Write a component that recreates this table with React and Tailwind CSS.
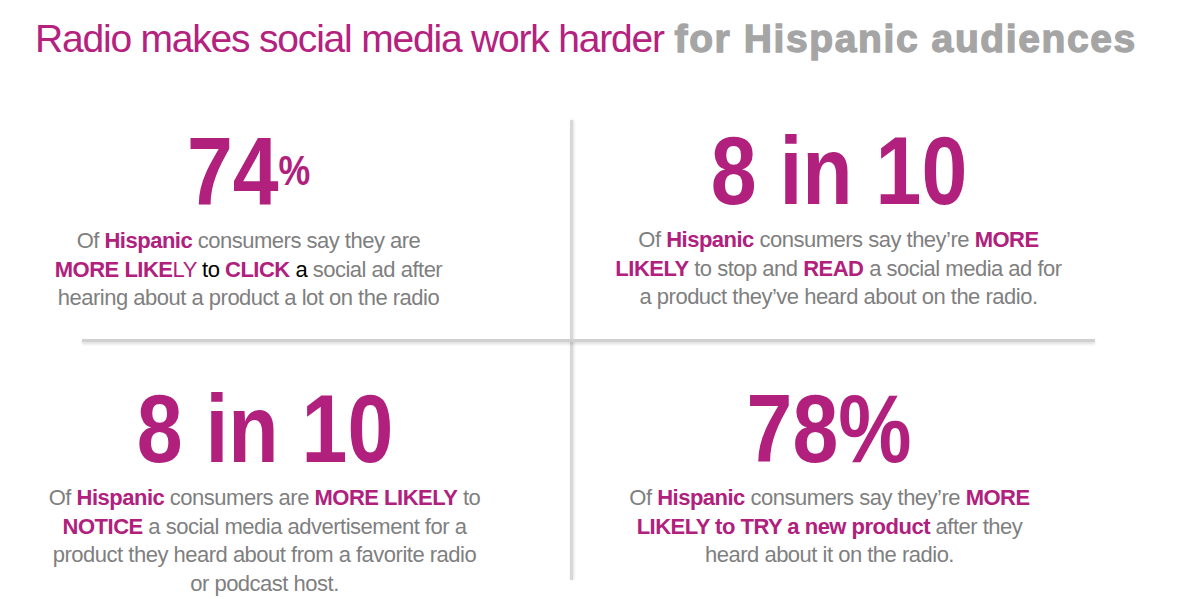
const M = ({ children }) => <b className="font-bold text-[#b0207c]">{children}</b>

const Big = ({ children }) => (
  <div className="text-center text-[97px] leading-[97px] font-bold text-[#b0207c]">
    <span className="inline-block scale-x-[0.85]">{children}</span>
  </div>
)

const Lines = ({ lines }) => (
  <div className="mt-[7px] text-center text-[22px] leading-[28.5px] tracking-[-0.5px] text-[#7f7f7f]">
    {lines.map((l, i) => (
      <div key={i} className="whitespace-nowrap">{l}</div>
    ))}
  </div>
)

export default function App() {
  return (
    <div className="w-[1198px] h-[599px] overflow-hidden bg-white font-['Liberation_Sans',Arial,sans-serif]">
      {/* Title */}
      <h1 className="pt-[15px] pl-[35px] text-[39px] leading-[48px] whitespace-nowrap">
        <span className="tracking-[-1.2px] text-[#b5217f]">Radio makes social media work harder</span>{' '}
        <span className="font-bold tracking-[1.6px] text-[#a5a5a5] [-webkit-text-stroke:1.3px_#a5a5a5]">for Hispanic audiences</span>
      </h1>

      {/* Quadrants */}
      <div className="mt-[57px] grid grid-cols-[570px_3px_1fr] grid-rows-[219px_3px_238px]">
        {/* vertical divider */}
        <div className="col-start-2 row-start-1 row-span-3 bg-[#d8d8d8] shadow-[1px_0_3px_rgba(0,0,0,0.12)]" />

        {/* top left */}
        <div className="col-start-1 row-start-1 pt-[2px] pr-[73px]">
          <Big>
            74<span className="text-[42px] align-[20px]">%</span>
          </Big>
          <Lines
            lines={[
              <>Of <M>Hispanic</M> consumers say they are</>,
              <>
                <M>MORE LIKE</M><span className="text-[#b0207c]">LY</span>{' '}
                <span className="text-black">to</span> <M>CLICK</M>{' '}
                <span className="text-black">a</span> social ad after
              </>,
              <>hearing about a product a lot on the radio</>,
            ]}
          />
        </div>

        {/* top right */}
        <div className="col-start-3 row-start-1 pt-[2px] pr-[94px]">
          <Big>8 in 10</Big>
          <Lines
            lines={[
              <>Of <M>Hispanic</M> consumers say they’re <M>MORE</M></>,
              <><M>LIKELY</M> to stop and <M>READ</M> a social media ad for</>,
              <>a product they’ve heard about on the radio.</>,
            ]}
          />
        </div>

        {/* horizontal divider */}
        <div className="col-start-1 col-span-3 row-start-2 ml-[82px] w-[1013px] bg-[#d0d0d0] shadow-[0_2px_3px_rgba(0,0,0,0.15)]" />

        {/* bottom left */}
        <div className="col-start-1 row-start-3 pt-[38px] pr-[41px]">
          <Big>8 in 10</Big>
          <Lines
            lines={[
              <>Of <M>Hispanic</M> consumers are <M>MORE LIKELY</M> to</>,
              <><M>NOTICE</M> a social media advertisement for a</>,
              <>product they heard about from a favorite radio</>,
              <>or podcast host.</>,
            ]}
          />
        </div>

        {/* bottom right */}
        <div className="col-start-3 row-start-3 pt-[38px] pr-[112px]">
          <Big>78%</Big>
          <Lines
            lines={[
              <>Of <M>Hispanic</M> consumers say they’re <M>MORE</M></>,
              <><M>LIKELY to TRY a new product</M> after they</>,
              <>heard about it on the radio.</>,
            ]}
          />
        </div>
      </div>
    </div>
  )
}
